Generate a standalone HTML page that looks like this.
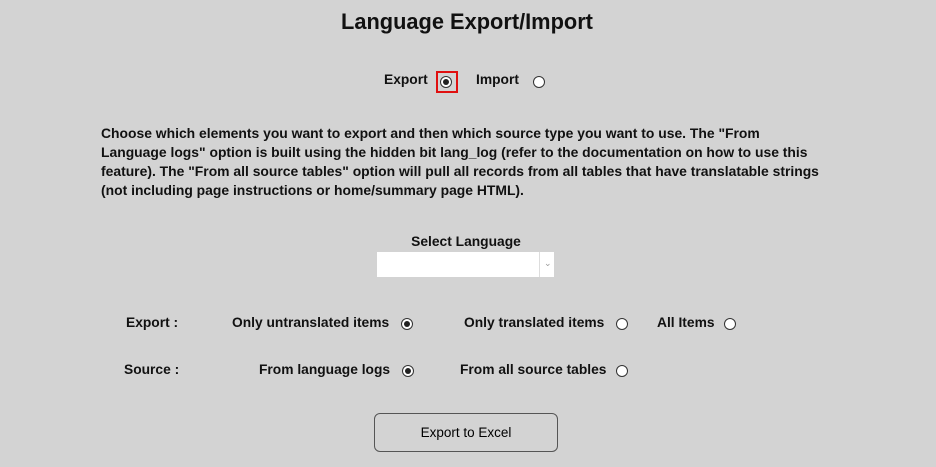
<!DOCTYPE html>
<html><head><style>
body{margin:0;width:936px;height:467px;background:#d3d3d3;font-family:"Liberation Sans",sans-serif;font-weight:bold;color:#111;position:relative;overflow:hidden}
.a{position:absolute;white-space:nowrap;font-size:13.8px}
.r{position:absolute;width:10px;height:10px;border:1px solid #333;border-radius:50%;background:#fff}
.r.on::after{content:"";position:absolute;left:2px;top:2px;width:6px;height:6px;border-radius:50%;background:#222}
</style></head><body>
<div class="a" style="left:0;width:934px;text-align:center;top:9px;font-size:21.8px;font-weight:bold">Language Export/Import</div>
<div class="a" style="left:384px;top:72px">Export</div>
<div style="position:absolute;left:436px;top:71px;width:18px;height:18px;border:2px solid #e01010"></div>
<div class="r on" style="left:440px;top:76px"></div>
<div class="a" style="left:476px;top:72px">Import</div>
<div class="r" style="left:533px;top:76px"></div>
<div class="a" style="left:101px;top:124px;line-height:19px;font-size:13.9px">Choose which elements you want to export and then which source type you want to use. The "From<br>Language logs" option is built using the hidden bit lang_log (refer to the documentation on how to use this<br>feature). The "From all source tables" option will pull all records from all tables that have translatable strings<br>(not including page instructions or home/summary page HTML).</div>
<div class="a" style="left:0;width:932px;text-align:center;top:234px">Select Language</div>
<div style="position:absolute;left:377px;top:252px;width:177px;height:25px;background:#fff"><div style="position:absolute;left:162px;top:0;width:1px;height:25px;background:#ddd"></div><div style="position:absolute;left:167px;top:6px;font-size:9px;color:#999;font-weight:normal">⌄</div></div>
<div class="a" style="left:126px;top:315px">Export :</div>
<div class="a" style="left:232px;top:315px">Only untranslated items</div>
<div class="r on" style="left:401px;top:318px"></div>
<div class="a" style="left:464px;top:315px">Only translated items</div>
<div class="r" style="left:616px;top:318px"></div>
<div class="a" style="left:657px;top:315px">All Items</div>
<div class="r" style="left:724px;top:318px"></div>
<div class="a" style="left:124px;top:362px">Source :</div>
<div class="a" style="left:259px;top:362px">From language logs</div>
<div class="r on" style="left:402px;top:365px"></div>
<div class="a" style="left:460px;top:362px">From all source tables</div>
<div class="r" style="left:616px;top:365px"></div>
<div style="position:absolute;left:374px;top:413px;width:184px;height:39px;border:1px solid #555;border-radius:6px;box-sizing:border-box;text-align:center;line-height:37px;font-size:13.5px;font-weight:normal;color:#000">Export to Excel</div>
</body></html>
